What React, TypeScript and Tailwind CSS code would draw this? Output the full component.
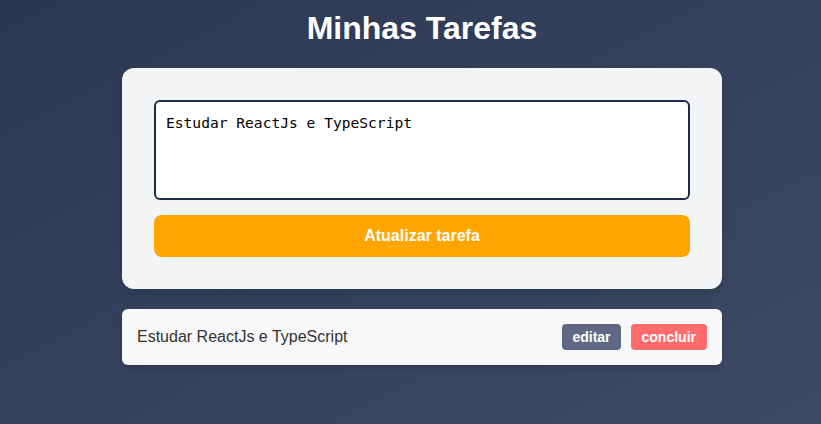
import React from "react";

export default function App() {
  return (
    <div
      className="min-h-[424px] w-full flex flex-col items-center pl-[23px] bg-gradient-to-br from-[#2c3853] to-[#3c4a66]"
      style={{ fontFamily: '"Liberation Sans", Arial, sans-serif' }}
    >
      <h1 className="text-[32px] leading-[37px] font-bold text-white mt-[10px] mb-[21px]">Minhas Tarefas</h1>
      <div className="w-[600px] bg-[#f3f4f6] rounded-[12px] p-[32px] flex flex-col gap-[15px] shadow-lg">
        <textarea
          className="w-full h-[100px] bg-white border-2 border-[#1f2a44] rounded-[6px] px-[10px] py-[12px] text-[14.6px] leading-[17px] text-black resize-none outline-none"
          style={{ fontFamily: '"DejaVu Sans Mono", "Liberation Mono", monospace' }}
          defaultValue="Estudar ReactJs e TypeScript"
        />
        <button className="w-full h-[42px] bg-[#ffa500] rounded-[8px] text-white font-bold text-[16px]">
          Atualizar tarefa
        </button>
      </div>
      <div className="w-[600px] mt-[20px] h-[56px] bg-[#f8f8f8] rounded-[6px] flex items-center justify-between pl-[15px] pr-[15px] shadow-md">
        <span className="text-[16px] text-[#333]">Estudar ReactJs e TypeScript</span>
        <div className="flex gap-[10px]">
          <button className="h-[26px] px-[10px] rounded-[4px] bg-[#5f6985] text-white font-bold text-[14px]">editar</button>
          <button className="h-[26px] px-[11px] rounded-[4px] bg-[#ff6b6b] text-white font-bold text-[14px]">concluir</button>
        </div>
      </div>
    </div>
  );
}
